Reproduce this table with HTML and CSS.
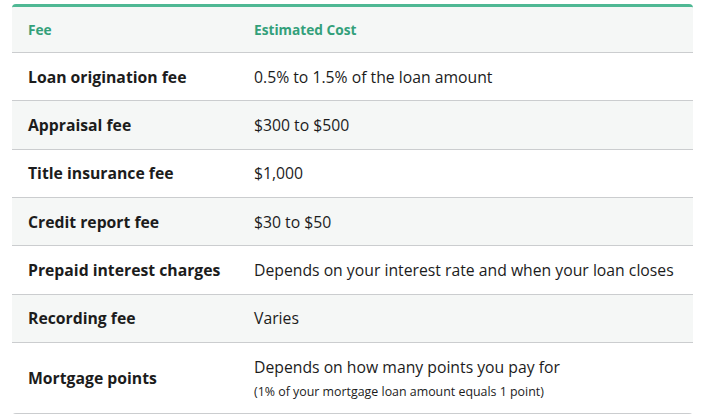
FILE: index.html
```html
<!DOCTYPE html>
<html>
<head>
<meta charset="utf-8">
<link rel="stylesheet" href="styles.css">
</head>
<body>
<table class="fees">
  <thead>
    <tr><th class="c1">Fee</th><th class="c2">Estimated Cost</th></tr>
  </thead>
  <tbody>
    <tr><td class="c1">Loan origination fee</td><td class="c2">0.5% to 1.5% of the loan amount</td></tr>
    <tr class="alt"><td class="c1">Appraisal fee</td><td class="c2">$300 to $500</td></tr>
    <tr><td class="c1">Title insurance fee</td><td class="c2">$1,000</td></tr>
    <tr class="alt"><td class="c1">Credit report fee</td><td class="c2">$30 to $50</td></tr>
    <tr><td class="c1">Prepaid interest charges</td><td class="c2">Depends on your interest rate and when your loan closes</td></tr>
    <tr class="alt"><td class="c1">Recording fee</td><td class="c2">Varies</td></tr>
    <tr class="tall"><td class="c1">Mortgage points</td><td class="c2">Depends on how many points you pay for<div class="note">(1% of your mortgage loan amount equals 1 point)</div></td></tr>
  </tbody>
</table>
</body>
</html>
```
FILE: styles.css
```css
html, body { margin: 0; padding: 0; background: #fff; }
body { padding: 4px 9px 0 12px; font-family: "Open Sans", sans-serif; color: #1c1c1c; }
.fees {
  width: 681px;
  border-collapse: separate;
  border-spacing: 0;
  border-top: 3px solid #4fb894;
  border-radius: 4px;
  overflow: hidden;
}
.fees th {
  background: #f5f7f6;
  color: #33a07a;
  font-size: 13.7px;
  font-weight: 700;
  text-align: left;
  height: 45px;
  padding: 0 16px;
  border-bottom: 1px solid #cbcdcf;
}
.fees td {
  height: 47.33px;
  padding: 0 16px;
  font-size: 15.75px;
  border-bottom: 1px solid #cbcdcf;
  vertical-align: middle;
}
.fees tr.alt td { background: #f5f7f6; }
.fees tr.tall td { height: 70px; }
.fees td .note { font-size: 12.4px; margin-top: 5px; }
.fees th.c1, .fees td.c1 { width: 194px; }
.fees td.c1 { font-weight: 700; }
```
